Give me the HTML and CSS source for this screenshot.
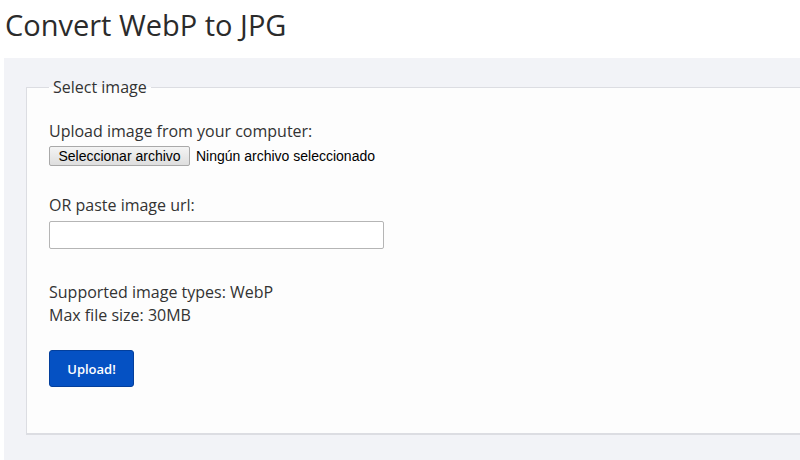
FILE: index.html
```html
<!DOCTYPE html>
<html lang="en">
<head>
  <meta charset="UTF-8">
  <title>Convert WebP to JPG</title>
  <link rel="stylesheet" href="styles.css">
</head>
<body>
  <h1 class="title">Convert WebP to JPG</h1>
  <div class="panel">
    <fieldset class="box">
      <legend>Select image</legend>
      <div class="field">
        <div class="label">Upload image from your computer:</div>
        <div class="file-row">
          <label class="file-btn" for="file">Seleccionar archivo</label>
          <span class="file-name">Ningún archivo seleccionado</span>
          <input type="file" id="file" class="file-hidden">
        </div>
      </div>
      <div class="field">
        <div class="label">OR paste image url:</div>
        <input type="text" class="url">
      </div>
      <div class="info">
        Supported image types: WebP<br>
        Max file size: 30MB
      </div>
      <button class="upload">Upload!</button>
    </fieldset>
  </div>
</body>
</html>
```

FILE: styles.css
```css
body {
  margin: 0;
  background: #fff;
  color: #333;
  font-family: "Open Sans", "Noto Sans", sans-serif;
  overflow: hidden;
}
.title {
  margin: 0;
  padding: 6px 0 0 5px;
  height: 52px;
  box-sizing: border-box;
  font-size: 29px;
  font-weight: 400;
  line-height: 38px;
  color: #2b2b2b;
}
.panel {
  margin: 6px -40px 0 4px;
  padding: 18px 0 0 22px;
  height: 384px;
  background: #f2f3f7;
}
.box {
  margin: 0;
  padding: 22px 0 46px 22px;
  background: #fdfdfd;
  border: 1px solid #dcdde2;
  border-bottom-width: 2px;
  border-right: none;
}
.box legend {
  padding: 0 4px;
  margin-left: 0;
  font-size: 16px;
  line-height: 22px;
  color: #333;
}
.field {
  margin-bottom: 28px;
}
.label {
  font-size: 16px;
  line-height: 23px;
}
.file-row {
  display: flex;
  align-items: center;
  margin-top: 3px;
  font-family: "Liberation Sans", Arial, sans-serif;
  font-size: 14px;
}
.file-btn {
  box-sizing: border-box;
  width: 141px;
  height: 20px;
  line-height: 18px;
  text-align: center;
  color: #000;
  background: linear-gradient(#f4f4f4, #dedede);
  border: 1px solid #a9a9a9;
  border-radius: 2px;
}
.file-name {
  margin-left: 6px;
  color: #000;
}
.file-hidden {
  display: none;
}
.url {
  display: block;
  box-sizing: border-box;
  margin-top: 4px;
  width: 335px;
  height: 28px;
  border: 1px solid #b5b5b5;
  border-radius: 2px;
  background: #fff;
}
.info {
  margin-top: 32px;
  font-size: 16px;
  line-height: 23px;
}
.upload {
  display: block;
  margin-top: 23px;
  width: 85px;
  height: 37px;
  padding: 0;
  background: #0551c3;
  border: 1px solid #033f9c;
  border-radius: 3px;
  color: #fff;
  font-family: "Open Sans", sans-serif;
  font-size: 13px;
  font-weight: 600;
  cursor: pointer;
}
```
